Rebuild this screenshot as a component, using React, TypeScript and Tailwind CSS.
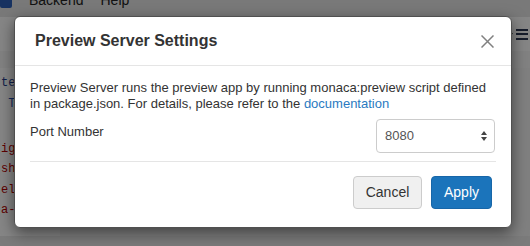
import React from "react";

const codeLines = [
  { text: "template", color: "text-[#1f3a8a]", indent: false },
  { text: "Title", color: "text-[#1f4fb0]", indent: true },
  { text: "", color: "", indent: false },
  { text: "ight: 100%", color: "text-[#b00000]", indent: false },
  { text: "show", color: "text-[#b00000]", indent: false },
  { text: "else", color: "text-[#b00000]", indent: false },
  { text: "a-list", color: "text-[#b00000]", indent: false },
];

function EditorBackground() {
  return (
    <div className="flex h-[246px] w-[530px] flex-col overflow-hidden bg-[#f1f1f1]">
      <div className="flex h-[17px] shrink-0 items-start overflow-hidden bg-[#e4e4e4] text-[14px] leading-[16px] text-[#222]">
        <div className="-mt-[8px] flex items-end gap-[17px]">
          <span className="h-[12px] w-[12px] rounded-[2px] bg-[#2c5fb8]" />
          <span>Backend</span>
          <span>Help</span>
        </div>
      </div>
      <div className="flex h-[34px] shrink-0 items-center justify-end bg-[#fdfdfd] pr-[2px]">
        <div className="mr-[3px] h-0 w-0 border-x-[2px] border-t-[3px] border-x-transparent border-t-[#333]" />
        <div className="flex w-[12px] flex-col gap-[2.5px]">
          <span className="h-[2px] bg-[#2a3552]" />
          <span className="h-[2px] bg-[#2a3552]" />
          <span className="h-[2px] bg-[#2a3552]" />
        </div>
      </div>
      <div className="h-[17px] shrink-0 bg-[#f6f6f6]" />
      <div className="flex flex-1">
        <div className="w-[60px] bg-[#fdfdfd] pt-[5px] font-['Liberation_Mono',monospace] text-[12px] leading-[20.5px]">
          {codeLines.map((l, i) => (
            <div
              key={i}
              className={`${l.color} ${i === 3 ? "mt-[4px]" : ""} h-[20.5px] whitespace-pre pl-px`}
            >
              {l.indent ? " " : ""}
              {l.text}
            </div>
          ))}
        </div>
        <div className="flex-1 bg-[#f1f1f1]" />
      </div>
      <div className="h-[10px] shrink-0 bg-[#e8e8e8]" />
    </div>
  );
}

function CloseIcon() {
  return (
    <svg width="13" height="13" viewBox="0 0 13 13" fill="none">
      <path d="M0.5 0.5 L12.5 12.5 M12.5 0.5 L0.5 12.5" stroke="#808080" strokeWidth="1.5" />
    </svg>
  );
}

function SpinArrows() {
  return (
    <svg width="6" height="10" viewBox="0 0 6 10">
      <path d="M3 0 L6 4 L0 4 Z" fill="#444" />
      <path d="M0 6 L6 6 L3 10 Z" fill="#444" />
    </svg>
  );
}

export default function App() {
  return (
    <div className="relative h-[246px] w-[530px] overflow-hidden font-['Liberation_Sans',Arial,sans-serif]">
      <EditorBackground />
      <div className="absolute inset-0 bg-black/[0.47]" />

      <div className="absolute left-[14px] top-[16px] w-[498px] rounded-[6px] border border-[#505050] bg-white shadow-[0_5px_15px_rgba(0,0,0,0.5)]">
        <div className="flex h-[49px] items-center justify-between border-b border-[#e5e5e5] pl-[20px] pr-[17px]">
          <h4 className="text-[16px] font-bold text-[#333]">Preview Server Settings</h4>
          <button type="button" className="flex items-center pt-[1px]">
            <CloseIcon />
          </button>
        </div>

        <div className="px-[15px] pt-[14px] text-[13px] leading-[16px] text-[#333]">
          <p className="mb-[7px]">
            Preview Server runs the preview app by running monaca:preview script defined in
            package.json. For details, please refer to the{" "}
            <a className="text-[#2a7ac1]">documentation</a>
          </p>
          <div className="flex items-start justify-between">
            <label className="pt-[5px]">Port Number</label>
            <div className="mr-px flex h-[34px] w-[119px] items-center justify-between rounded-[4px] border border-[#cccccc] bg-white pl-[8px] pr-[7px] text-[13px] text-[#555]">
              <span>8080</span>
              <SpinArrows />
            </div>
          </div>
          <hr className="mt-[8px] border-t border-[#e5e5e5]" />
        </div>

        <div className="flex justify-end gap-[9px] pb-[18px] pl-[15px] pr-[19px] pt-[14px] text-[14px]">
          <button
            type="button"
            className="h-[33px] w-[69px] rounded-[4px] border border-[#cccccc] bg-[#f0f0f0] text-[#333]"
          >
            Cancel
          </button>
          <button
            type="button"
            className="h-[33px] w-[61px] rounded-[4px] border border-[#1766a8] bg-[#1b74bb] text-white"
          >
            Apply
          </button>
        </div>
      </div>
    </div>
  );
}
